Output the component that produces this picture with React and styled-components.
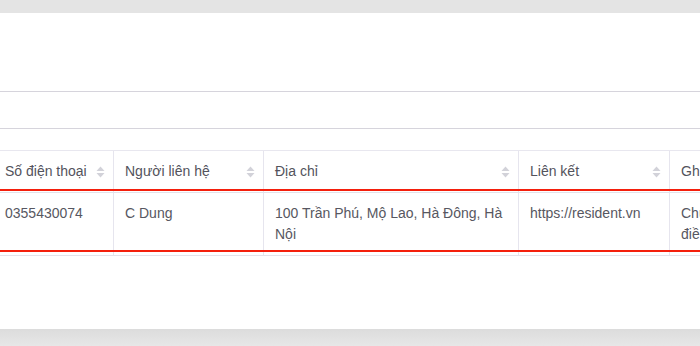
import React from "react";
import styled, { createGlobalStyle } from "styled-components";

const GlobalStyle = createGlobalStyle`
  html, body {
    margin: 0;
    padding: 0;
    background: #e4e4e4;
    font-family: "Liberation Sans", Arial, sans-serif;
  }
`;

const Page = styled.div`
  width: 700px;
  height: 346px;
  display: flex;
  flex-direction: column;
  overflow: hidden;
  background: #e4e4e4;
`;

const TopBand = styled.div`
  height: 13px;
  flex-shrink: 0;
  background: #e4e4e4;
`;

const Panel = styled.div`
  height: 316px;
  flex-shrink: 0;
  background: #ffffff;
  display: flex;
  flex-direction: column;
`;

const PanelHead = styled.div`
  height: 78px;
  flex-shrink: 0;
`;

const Toolbar = styled.div`
  height: 36px;
  flex-shrink: 0;
  border-top: 1px solid #d6d4dc;
  border-bottom: 1px solid #d6d4dc;
`;

const TableScroller = styled.div`
  margin-top: 21px;
  overflow: hidden;
  position: relative;
`;

const Table = styled.table`
  border-collapse: collapse;
  table-layout: fixed;
  margin-left: -7px;
  width: ${(p) => p.$w}px;
  font-size: 14px;
  line-height: 21px;
  color: #575761;
`;

const HeadCell = styled.th`
  box-sizing: border-box;
  padding: 10px 11px;
  text-align: left;
  font-weight: normal;
  color: #53535c;
  border-top: 1px solid #e8e7ef;
  border-bottom: 1px solid #e3e2ea;
  border-left: 1px solid #e6e5ee;
  background: #ffffff;
  white-space: nowrap;
  overflow: hidden;
`;

const HeadInner = styled.div`
  display: flex;
  align-items: center;
  justify-content: space-between;
`;

const Cell = styled.td`
  box-sizing: border-box;
  padding: 10px 11px;
  vertical-align: top;
  border-left: 1px solid #e6e5ee;
  border-bottom: 1px solid #e3e2ea;
  word-wrap: break-word;
`;

const SortIcon = styled.svg`
  width: 9px;
  height: 12px;
  flex-shrink: 0;
  margin-right: -3px;
`;

const RowHighlight = styled.div`
  position: absolute;
  left: 0;
  right: 0;
  top: 39px;
  height: 59px;
  border-top: 2px solid #f41f0c;
  border-bottom: 2px solid #f41f0c;
  pointer-events: none;
`;

const BottomBand = styled.div`
  flex: 1;
  background: linear-gradient(#dcdcdc, #e7e7e7);
`;

const Sorter = () => (
  <SortIcon viewBox="0 0 9 12">
    <path d="M4.5 0.5 L8.5 5 L0.5 5 Z" fill="#d2d2d9" />
    <path d="M4.5 11.5 L8.5 7 L0.5 7 Z" fill="#d2d2d9" />
  </SortIcon>
);

const columns = [
  { title: "Số điện thoại", width: 120, sortable: true },
  { title: "Người liên hệ", width: 150, sortable: true },
  { title: "Địa chỉ", width: 255, sortable: true },
  { title: "Liên kết", width: 151, sortable: true },
  { title: "Ghi chú", width: 150, sortable: false },
];

const rows = [
  [
    "0355430074",
    "C Dung",
    "100 Trần Phú, Mộ Lao, Hà Đông, Hà Nội",
    "https://resident.vn",
    "Chung cư cao cấp, điều hòa trung tâm",
  ],
];

const tableWidth = columns.reduce((sum, c) => sum + c.width, 0);

export default function App() {
  return (
    <>
      <GlobalStyle />
      <Page>
        <TopBand />
        <Panel>
          <PanelHead />
          <Toolbar />
          <TableScroller>
            <Table $w={tableWidth}>
              <colgroup>
                {columns.map((col) => (
                  <col key={col.title} style={{ width: col.width }} />
                ))}
              </colgroup>
              <thead>
                <tr>
                  {columns.map((col) => (
                    <HeadCell key={col.title}>
                      <HeadInner>
                        <span>{col.title}</span>
                        {col.sortable && <Sorter />}
                      </HeadInner>
                    </HeadCell>
                  ))}
                </tr>
              </thead>
              <tbody>
                {rows.map((row, idx) => (
                  <tr key={idx}>
                    {row.map((value, i) => (
                      <Cell key={i}>{value}</Cell>
                    ))}
                  </tr>
                ))}
              </tbody>
            </Table>
            <RowHighlight />
          </TableScroller>
        </Panel>
        <BottomBand />
      </Page>
    </>
  );
}
